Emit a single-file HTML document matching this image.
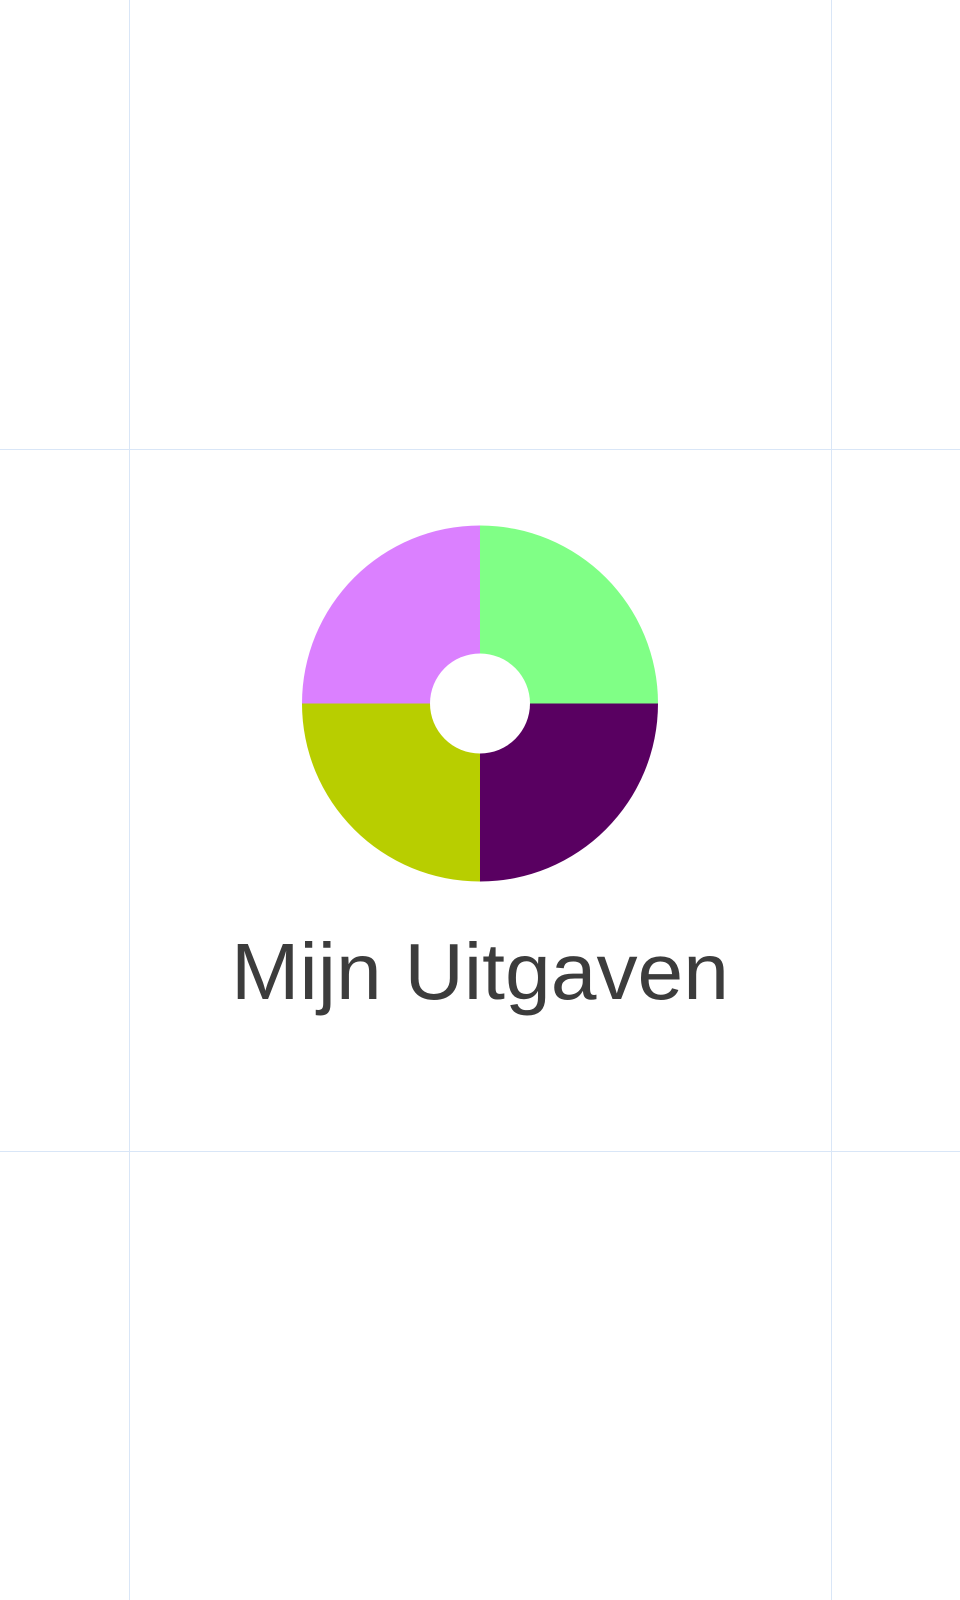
<!DOCTYPE html>
<html><head><meta charset="utf-8"><style>
html,body{margin:0;padding:0;background:#fff;width:960px;height:1600px;overflow:hidden}
</style></head><body>
<svg width="960" height="1600" viewBox="0 0 960 1600" xmlns="http://www.w3.org/2000/svg" style="display:block">
<rect width="960" height="1600" fill="#fff"/>
<g stroke="#d9e6f7" stroke-width="1">
<line x1="129.5" y1="0" x2="129.5" y2="1600"/>
<line x1="831.5" y1="0" x2="831.5" y2="1600"/>
<line x1="0" y1="449.5" x2="960" y2="449.5"/>
<line x1="0" y1="1151.5" x2="960" y2="1151.5"/>
</g>
<g>
<path d="M480 703.5 L480 525.5 A178 178 0 0 1 658 703.5 Z" fill="#80ff86"/>
<path d="M480 703.5 L658 703.5 A178 178 0 0 1 480 881.5 Z" fill="#590061"/>
<path d="M480 703.5 L480 881.5 A178 178 0 0 1 302 703.5 Z" fill="#b8ce00"/>
<path d="M480 703.5 L302 703.5 A178 178 0 0 1 480 525.5 Z" fill="#db80ff"/>
<circle cx="480" cy="703.5" r="50" fill="#fff"/>
</g>
<text x="231" y="999" font-family="Liberation Sans, sans-serif" font-size="80" fill="#3c3c3c" textLength="498" lengthAdjust="spacingAndGlyphs">Mijn Uitgaven</text>
</svg>
</body></html>
